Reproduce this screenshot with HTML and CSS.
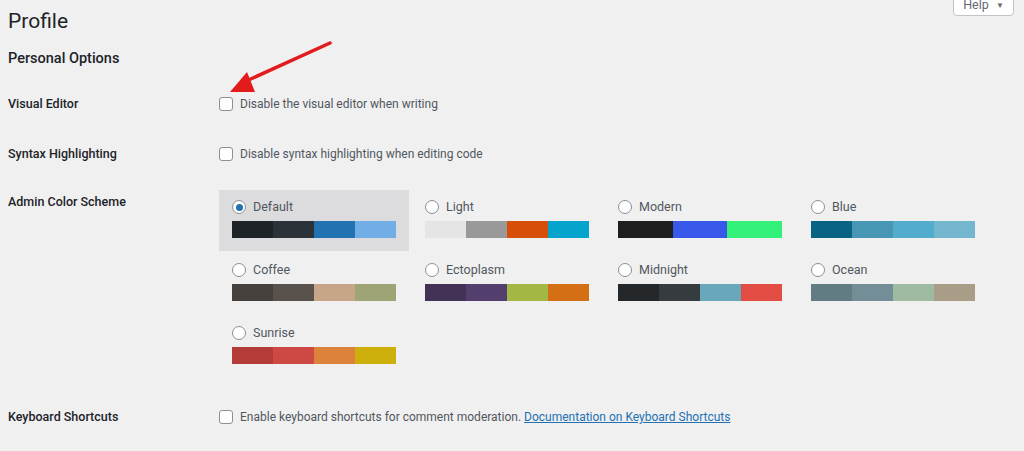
FILE: index.html
```html
<!DOCTYPE html>
<html lang="en">
<head>
    <meta charset="UTF-8">
    <meta name="viewport" content="width=device-width, initial-scale=1.0">
    <title>Profile</title>
    <link rel="stylesheet" href="styles.css">
</head>
<body>
    <button class="help-tab">Help <span class="help-caret">&#9660;</span></button>

    <div class="wrap">
        <h1>Profile</h1>
        <h2>Personal Options</h2>

        <div class="form-row row-visual">
            <div class="row-label">Visual Editor</div>
            <div class="row-field">
                <label class="check"><span class="checkbox"></span>Disable the visual editor when writing</label>
            </div>
        </div>

        <div class="form-row">
            <div class="row-label">Syntax Highlighting</div>
            <div class="row-field">
                <label class="check"><span class="checkbox"></span>Disable syntax highlighting when editing code</label>
            </div>
        </div>

        <div class="form-row row-colors">
            <div class="row-label">Admin Color Scheme</div>
            <div class="row-field">
                <div class="color-picker">
                    <div class="color-option selected">
                        <label class="radio-label"><span class="radio checked"></span>Default</label>
                        <div class="palette">
                            <span style="background:#1d2327"></span><span style="background:#2c3338"></span><span style="background:#2271b1"></span><span style="background:#72aee6"></span>
                        </div>
                    </div>
                    <div class="color-option">
                        <label class="radio-label"><span class="radio"></span>Light</label>
                        <div class="palette">
                            <span style="background:#e5e5e5"></span><span style="background:#999999"></span><span style="background:#d64e07"></span><span style="background:#04a4cc"></span>
                        </div>
                    </div>
                    <div class="color-option">
                        <label class="radio-label"><span class="radio"></span>Modern</label>
                        <div class="palette">
                            <span style="background:#1e1e1e"></span><span style="background:#3858e9"></span><span style="background:#33f078"></span>
                        </div>
                    </div>
                    <div class="color-option">
                        <label class="radio-label"><span class="radio"></span>Blue</label>
                        <div class="palette">
                            <span style="background:#096484"></span><span style="background:#4796b3"></span><span style="background:#52accc"></span><span style="background:#74b6ce"></span>
                        </div>
                    </div>
                    <div class="color-option">
                        <label class="radio-label"><span class="radio"></span>Coffee</label>
                        <div class="palette">
                            <span style="background:#46403c"></span><span style="background:#59524c"></span><span style="background:#c7a589"></span><span style="background:#9ea476"></span>
                        </div>
                    </div>
                    <div class="color-option">
                        <label class="radio-label"><span class="radio"></span>Ectoplasm</label>
                        <div class="palette">
                            <span style="background:#413256"></span><span style="background:#523f6d"></span><span style="background:#a3b745"></span><span style="background:#d46f15"></span>
                        </div>
                    </div>
                    <div class="color-option">
                        <label class="radio-label"><span class="radio"></span>Midnight</label>
                        <div class="palette">
                            <span style="background:#25282b"></span><span style="background:#363b3f"></span><span style="background:#69a8bb"></span><span style="background:#e14d43"></span>
                        </div>
                    </div>
                    <div class="color-option">
                        <label class="radio-label"><span class="radio"></span>Ocean</label>
                        <div class="palette">
                            <span style="background:#627c83"></span><span style="background:#738e96"></span><span style="background:#9ebaa0"></span><span style="background:#aa9d88"></span>
                        </div>
                    </div>
                    <div class="color-option">
                        <label class="radio-label"><span class="radio"></span>Sunrise</label>
                        <div class="palette">
                            <span style="background:#b43c38"></span><span style="background:#cf4944"></span><span style="background:#dd823b"></span><span style="background:#ccaf0b"></span>
                        </div>
                    </div>
                </div>
            </div>
        </div>

        <div class="form-row row-keys">
            <div class="row-label">Keyboard Shortcuts</div>
            <div class="row-field">
                <label class="check"><span class="checkbox"></span>Enable keyboard shortcuts for comment moderation.&nbsp;<a href="#">Documentation on Keyboard Shortcuts</a></label>
            </div>
        </div>
    </div>

    <!-- red pointer arrow drawn over the page -->
    <svg class="pointer" width="140" height="70" viewBox="0 0 140 70">
        <line x1="120" y1="3" x2="34" y2="42" stroke="#e21c1c" stroke-width="3.5" stroke-linecap="round"/>
        <polygon points="20,52 37,32 45,52" fill="#e21c1c"/>
    </svg>
</body>
</html>
```

FILE: styles.css
```css
body {
    margin: 0;
    background: #f0f0f1;
    color: #1d2327;
    font-family: Roboto, "Open Sans", Arial, sans-serif;
    font-size: 12px;
    position: relative;
    overflow: hidden;
    height: 451px;
}
.wrap {
    padding: 0 8px;
}
h1 {
    font-size: 21px;
    font-weight: 400;
    line-height: 30px;
    margin: 6px 0 0;
}
h2 {
    font-size: 14.5px;
    font-weight: 500;
    line-height: 20px;
    margin: 13px 0 0;
}
.form-row {
    display: flex;
    padding: 15px 0;
}
.row-visual {
    margin-top: 10px;
}
.row-colors {
    padding: 11px 0 0;
}
.row-keys {
    padding-top: 30px;
}
.row-label {
    width: 211px;
    flex-shrink: 0;
    font-weight: 500;
    font-size: 12.5px;
    line-height: 20px;
}
.row-colors .row-label {
    padding-top: 2px;
}
.row-field {
    line-height: 20px;
}
.check {
    display: flex;
    align-items: center;
    color: #50575e;
}
.checkbox {
    width: 12px;
    height: 12px;
    border: 1px solid #8c8f94;
    border-radius: 3px;
    background: #fff;
    margin-right: 7px;
}
.check a {
    color: #2271b1;
    text-decoration: underline;
}
.color-picker {
    display: grid;
    grid-template-columns: repeat(4, 190px);
    column-gap: 3px;
    row-gap: 2px;
}
.color-option {
    height: 61px;
    box-sizing: border-box;
    padding: 7px 13px 0;
}
.color-option.selected {
    background: #dcdcde;
}
.radio-label {
    display: flex;
    align-items: center;
    color: #50575e;
    font-size: 12.5px;
    line-height: 20px;
    height: 20px;
}
.radio {
    width: 12px;
    height: 12px;
    border: 1px solid #8c8f94;
    border-radius: 50%;
    background: #fff;
    margin-right: 7px;
    display: flex;
    align-items: center;
    justify-content: center;
}
.radio.checked::after {
    content: "";
    width: 7px;
    height: 7px;
    border-radius: 50%;
    background: #2271b1;
}
.palette {
    display: flex;
    width: 164px;
    height: 17px;
    margin-top: 4px;
}
.palette span {
    flex: 1;
}
.help-tab {
    position: absolute;
    top: -14px;
    right: 10px;
    width: 61px;
    height: 30px;
    padding: 8px 0 0;
    border: 1px solid #c3c4c7;
    border-radius: 0 0 4px 4px;
    background: #fff;
    color: #646970;
    font-family: inherit;
    font-size: 12.5px;
    line-height: 14px;
    box-sizing: border-box;
}
.help-caret {
    font-size: 8px;
    margin-left: 4px;
    vertical-align: 1px;
}
.pointer {
    position: absolute;
    left: 210px;
    top: 40px;
}
```
